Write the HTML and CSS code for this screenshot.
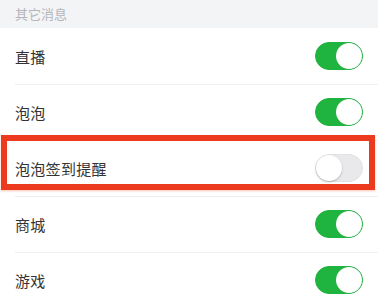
FILE: index.html
```html
<!DOCTYPE html>
<html lang="zh-CN">
<head>
<meta charset="utf-8">
<link rel="stylesheet" href="styles.css">
</head>
<body>
<div class="page">
  <div class="section-title">其它消息</div>
  <div class="list">
    <div class="row"><span class="label">直播</span><span class="switch on"></span></div>
    <div class="row"><span class="label">泡泡</span><span class="switch on"></span></div>
    <div class="row highlighted"><span class="label">泡泡签到提醒</span><span class="switch"></span><span class="mark"></span></div>
    <div class="row"><span class="label">商城</span><span class="switch on"></span></div>
    <div class="row"><span class="label">游戏</span><span class="switch on"></span></div>
  </div>
</div>
</body>
</html>
```

FILE: styles.css
```css
* { box-sizing: border-box; }
html, body { margin: 0; padding: 0; background: #fff; }
body { font-family: "Noto Sans CJK SC", "Noto Sans", sans-serif; color: #333; overflow: hidden; }
.page { width: 378px; height: 304px; overflow: hidden; }
.section-title {
  height: 28px;
  background: #f3f4f6;
  color: #b4b6ba;
  font-size: 13px;
  line-height: 28px;
  padding-left: 15px;
}
.list { background: #fff; }
.row {
  position: relative;
  height: 56px;
  display: flex;
  align-items: center;
  justify-content: space-between;
  padding: 0 15px 0 15px;
}
.row + .row::before {
  content: "";
  position: absolute;
  left: 15px; right: 0; top: 0;
  height: 1px;
  background: #f0f0f0;
}
.label { font-size: 15px; color: #333; letter-spacing: 0.3px; }
.switch {
  position: relative;
  width: 48px;
  height: 28px;
  border-radius: 14px;
  background: #e9e9eb;
  border: 1px solid #e2e2e4;
  margin-right: 0;
}
.switch::after {
  content: "";
  position: absolute;
  top: 0; left: 0;
  width: 26px; height: 26px;
  border-radius: 50%;
  background: #fff;
  box-shadow: 0 1px 2px rgba(0,0,0,0.25);
}
.switch.on { background: #1eb43f; border-color: #1eb43f; }
.switch.on::after { left: 20px; box-shadow: 0 0 1px rgba(0,0,0,0.2); }
.mark {
  position: absolute;
  left: 1px; right: 3px; top: -5px; bottom: 6px;
  border: 6px solid #ec3a1f;
  box-shadow: 0 1px 2px rgba(236,80,40,0.35);
  pointer-events: none;
}
.highlighted .label, .highlighted .switch { position: relative; }
```
